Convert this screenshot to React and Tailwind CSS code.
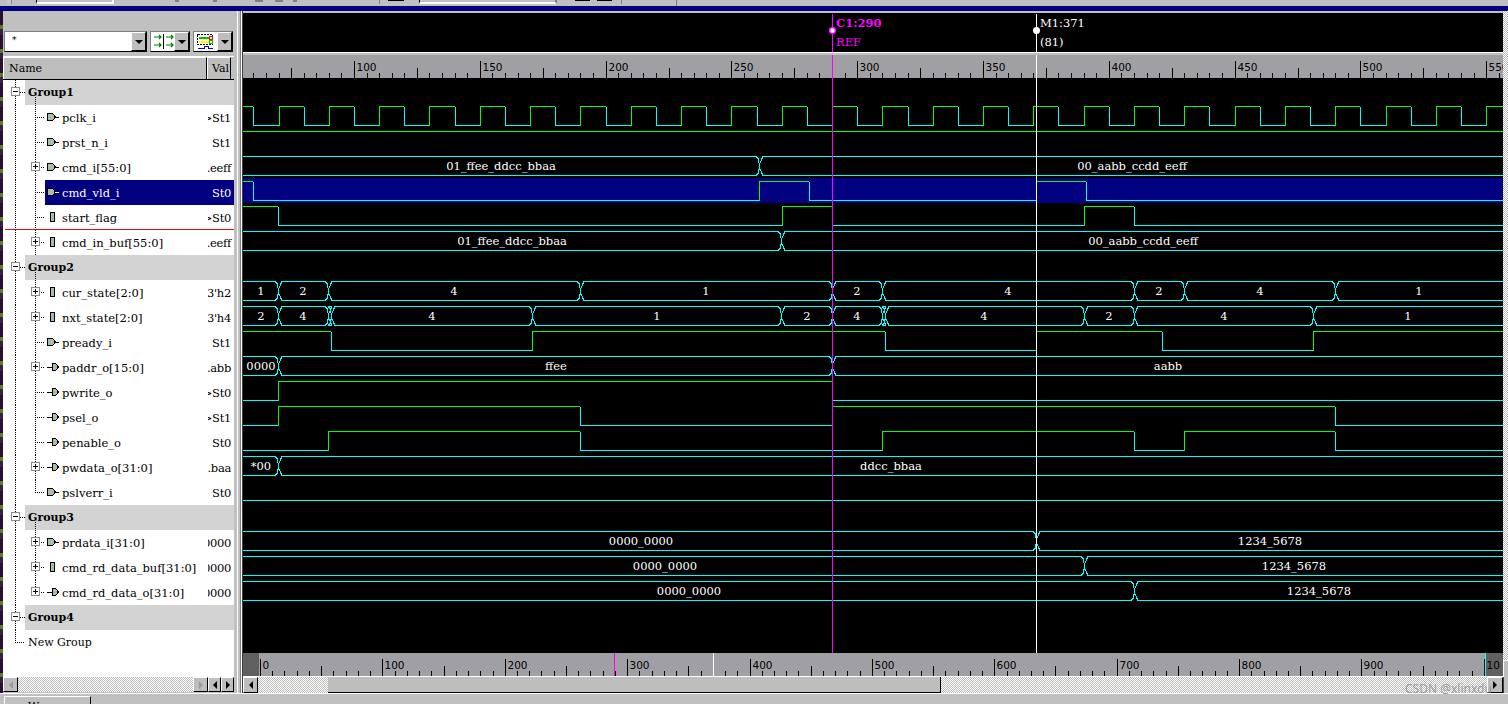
import React from 'react';

const font = { serif: 'font-["DejaVu_Serif",serif]' };
const CYAN = '#00ffff';
const GREEN = '#00ff00';
const MAGENTA = '#ff00ff';

const rows = [
  { type: 'group', name: 'Group1', c: 92 },
  { name: 'pclk_i', val: '>St1', icon: 'in', c: 117 },
  { name: 'prst_n_i', val: 'St1', icon: 'in', c: 142 },
  { name: 'cmd_i[55:0]', val: '.eeff', icon: 'in', plus: true, c: 167 },
  { name: 'cmd_vld_i', val: 'St0', icon: 'in', selected: true, c: 192 },
  { name: 'start_flag', val: '>St0', icon: 'reg', c: 217 },
  { name: 'cmd_in_buf[55:0]', val: '.eeff', icon: 'reg', plus: true, c: 242 },
  { type: 'group', name: 'Group2', c: 267 },
  { name: 'cur_state[2:0]', val: "3'h2", icon: 'reg', plus: true, c: 292 },
  { name: 'nxt_state[2:0]', val: "3'h4", icon: 'reg', plus: true, c: 317 },
  { name: 'pready_i', val: 'St1', icon: 'in', c: 342 },
  { name: 'paddr_o[15:0]', val: '.abb', icon: 'out', plus: true, c: 367 },
  { name: 'pwrite_o', val: '>St0', icon: 'out', c: 392 },
  { name: 'psel_o', val: '>St1', icon: 'out', c: 417 },
  { name: 'penable_o', val: 'St0', icon: 'out', c: 442 },
  { name: 'pwdata_o[31:0]', val: '.baa', icon: 'out', plus: true, c: 467 },
  { name: 'pslverr_i', val: 'St0', icon: 'in', last: true, c: 492 },
  { type: 'group', name: 'Group3', c: 517 },
  { name: 'prdata_i[31:0]', val: '0000', icon: 'in', plus: true, c: 542 },
  { name: 'cmd_rd_data_buf[31:0]', val: '0000', icon: 'reg', plus: true, c: 567 },
  { name: 'cmd_rd_data_o[31:0]', val: '0000', icon: 'out', plus: true, last: true, c: 592 },
  { type: 'group', name: 'Group4', c: 617, noChild: true },
  { type: 'new', name: 'New Group', c: 642 },
];

// digital waves: row centre, first level, edge x positions
const clkEdges = [];
for (let t = 60; t < 555; t += 10) clkEdges.push(Math.round(354 + (t - 100) * 2.516));

const digital = [
  { c: 117, start: 1, edges: clkEdges },
  { c: 142, start: 1, edges: [] },
  { c: 192, start: 1, edges: [253, 759, 809, 1036, 1086] },
  { c: 217, start: 1, edges: [278, 782, 832, 1084, 1134] },
  { c: 342, start: 1, edges: [331, 532, 885, 1036, 1162, 1313] },
  { c: 392, start: 0, edges: [278, 832] },
  { c: 417, start: 0, edges: [278, 580, 832, 1335] },
  { c: 442, start: 0, edges: [328, 580, 882, 1134, 1184, 1335] },
  { c: 492, start: 0, edges: [] },
];

const buses = [
  { c: 167, xs: [759], labels: [['01_ffee_ddcc_bbaa', 501], ['00_aabb_ccdd_eeff', 1132]] },
  { c: 242, xs: [781], labels: [['01_ffee_ddcc_bbaa', 512], ['00_aabb_ccdd_eeff', 1143]] },
  {
    c: 292, xs: [278, 328, 580, 832, 882, 1134, 1184, 1335],
    labels: [['1', 261], ['2', 303], ['4', 454], ['1', 706], ['2', 857], ['4', 1008], ['2', 1159], ['4', 1260], ['1', 1419]],
  },
  {
    c: 317, xs: [278, 328, 331, 532, 781, 832, 882, 885, 1084, 1134, 1313],
    labels: [['2', 261], ['4', 303], ['4', 432], ['1', 657], ['2', 807], ['4', 857], ['4', 984], ['2', 1109], ['4', 1224], ['1', 1408]],
  },
  { c: 367, xs: [278, 832], labels: [['0000', 261], ['ffee', 556], ['aabb', 1168]] },
  { c: 467, xs: [278], labels: [['*00', 261], ['ddcc_bbaa', 891]] },
  { c: 542, xs: [1036], labels: [['0000_0000', 641], ['1234_5678', 1270]] },
  { c: 567, xs: [1084], labels: [['0000_0000', 665], ['1234_5678', 1294]] },
  { c: 592, xs: [1134], labels: [['0000_0000', 689], ['1234_5678', 1319]] },
];

function DigitalWave({ c, start, edges }) {
  const hi = c - 10.5;
  const lo = c + 8.5;
  const pts = [243, ...edges, 1503];
  let level = start;
  const parts = [];
  for (let i = 0; i < pts.length - 1; i++) {
    const y = level ? hi : lo;
    parts.push(<line key={'h' + i} x1={pts[i]} x2={pts[i + 1]} y1={y} y2={y} stroke={level ? GREEN : CYAN} />);
    if (i < pts.length - 2) {
      // rising edge is drawn green, falling edge cyan
      parts.push(<line key={'v' + i} x1={pts[i + 1] + 0.5} x2={pts[i + 1] + 0.5} y1={hi} y2={lo} stroke={level ? CYAN : GREEN} />);
    }
    level = level ? 0 : 1;
  }
  return <g>{parts}</g>;
}

function BusWave({ c, xs, labels }) {
  const hi = c - 10.5;
  const lo = c + 8.5;
  const mid = c - 1;
  const pts = [243, ...xs, 1506];
  return (
    <g>
      {pts.slice(0, -1).map((x, i) => {
        const a = i === 0 ? x : x + 4;
        const b = pts[i + 1] - 3;
        return (
          <g key={i}>
            <line x1={a} x2={b} y1={hi} y2={hi} stroke={CYAN} />
            <line x1={a} x2={b} y1={lo} y2={lo} stroke={CYAN} />
          </g>
        );
      })}
      {xs.map((x) => (
        <path
          key={x}
          d={`M${x - 3} ${hi}L${x - 1} ${hi + 2}L${x} ${mid - 3}L${x + 1} ${mid - 3}L${x + 3} ${hi + 2}L${x + 4} ${hi}M${x - 3} ${lo}L${x - 1} ${lo - 2}L${x} ${mid + 3}L${x + 1} ${mid + 3}L${x + 3} ${lo - 2}L${x + 4} ${lo}M${x + 0.5} ${mid - 3}V${mid + 3}`}
          fill="none"
          stroke={CYAN}
        />
      ))}
      {labels.map(([text, x], i) => (
        <text key={i} x={x} y={c + 3} textAnchor="middle" fill="#fff" fontSize="11.5" stroke="none" style={{ fontFamily: '"DejaVu Serif", serif' }}>
          {text}
        </text>
      ))}
    </g>
  );
}

function SignalIcon({ kind, selected }) {
  const fill = '#a9bdaa';
  const ink = selected ? '#fff' : '#000';
  if (kind === 'reg') {
    return <rect x="50.5" y="-4.5" width="4" height="9" fill={fill} stroke="#000" />;
  }
  if (kind === 'in') {
    return (
      <g>
        <path d="M47.5 -3.5H52.5L55.5 0L52.5 3.5H47.5Z" fill={fill} stroke="#000" />
        <line x1="55" x2="59" y1="0.5" y2="0.5" stroke={ink} />
      </g>
    );
  }
  return (
    <g>
      <line x1="47" x2="52" y1="0.5" y2="0.5" stroke={ink} />
      <path d="M52.5 -3.5H55.5L58.5 0L55.5 3.5H52.5Z" fill={fill} stroke="#000" />
    </g>
  );
}

function Expander({ x, minus }) {
  return (
    <g>
      <rect x={x + 0.5} y="-4.5" width="8" height="8" fill="#fff" stroke="#8c8c8c" />
      <line x1={x + 2} x2={x + 7} y1="-0.5" y2="-0.5" stroke="#000" />
      {!minus && <line x1={x + 4.5} x2={x + 4.5} y1="-3" y2="2" stroke="#000" />}
    </g>
  );
}

function TreeRow({ row }) {
  const isGroup = row.type === 'group';
  const isNew = row.type === 'new';
  const childLine = !isGroup && !isNew;
  // vertical rail of the children ends at the last signal of a group
  const rail2 = childLine ? (row.last ? 'M35.5 -12V0' : 'M35.5 -12V13') : isGroup && !row.noChild ? 'M35.5 5V13' : '';
  return (
    <div className="relative flex h-[25px] items-stretch">
      {isGroup && <div className="absolute top-0 bottom-0 left-[21px] right-0 bg-[#d3d3d3]" />}
      {row.selected && <div className="absolute top-0 bottom-0 left-[41px] right-0 bg-[#000080]" />}
      <svg width="58" height="25" viewBox="4 -12 58 25" className="relative shrink-0" shapeRendering="crispEdges">
        <path d={isNew ? 'M15.5 -12V0' : 'M15.5 -12V13'} stroke="#000" strokeDasharray="1 1" fill="none" />
        {(isGroup || isNew) && <path d={isGroup ? 'M20 0.5H25' : 'M15 0.5H25'} stroke="#000" strokeDasharray="1 1" fill="none" />}
        {isGroup && <Expander x={11} minus />}
        {rail2 && <path d={rail2} stroke="#000" strokeDasharray="1 1" fill="none" />}
        {childLine && <path d="M35 0.5H45" stroke="#000" strokeDasharray="1 1" fill="none" />}
        {row.plus && <Expander x={31} />}
        {childLine && <SignalIcon kind={row.icon} selected={row.selected} />}
      </svg>
      {isGroup || isNew ? (
        <span className={`absolute left-[24px] top-[5px] text-[11px] leading-[16px] text-black ${isGroup ? 'font-bold' : ''} ${font.serif}`}>
          {row.name}
        </span>
      ) : (
        <>
          <span className={`relative flex-1 pt-[5px] text-[11.5px] leading-[16px] whitespace-nowrap ${row.selected ? 'text-white' : 'text-black'} ${font.serif}`}>
            {row.name}
          </span>
          <span className={`relative flex w-[26px] shrink-0 justify-end overflow-hidden pt-[5px] text-[11.5px] leading-[16px] tracking-[-0.3px] whitespace-nowrap ${row.selected ? 'text-white' : 'text-black'} ${font.serif}`}>
            <span className="shrink-0 pr-[3px]">{row.val}</span>
          </span>
        </>
      )}
    </div>
  );
}

function Arrow({ dir = 'down', muted }) {
  const d = { down: 'M0 0H8L4 4Z', left: 'M4 0V8L0 4Z', right: 'M0 0V8L4 4Z' }[dir];
  return (
    <svg width={dir === 'down' ? 8 : 4} height={dir === 'down' ? 4 : 8} viewBox={dir === 'down' ? '0 0 8 4' : '0 0 4 8'}>
      <path d={d} fill={muted ? '#9a9a9a' : '#000'} />
    </svg>
  );
}

function RaisedBtn({ children, className = '' }) {
  return (
    <div className={`flex items-center justify-center border-t border-l border-t-white border-l-white border-r border-b border-r-black border-b-black bg-[#bebebe] ${className}`}>
      {children}
    </div>
  );
}

function Track({ className = '' }) {
  return <div className={`bg-[repeating-conic-gradient(#bdbdbd_0_25%,#ffffff_0_50%)] bg-[length:2px_2px] ${className}`} />;
}

function ToolCombo({ children, w }) {
  return (
    <div className={`flex h-[21px] items-stretch border border-t-[#808080] border-l-[#808080] border-r-black border-b-black bg-white ${w}`}>
      <div className="flex-1 overflow-hidden">{children}</div>
      <RaisedBtn className="w-[15px]"><Arrow /></RaisedBtn>
    </div>
  );
}

function TopRuler() {
  const ticks = [];
  for (let t = 55; t <= 555; t += 5) {
    const x = Math.round(354 + (t - 100) * 2.516) + 0.5;
    const big = t % 50 === 0;
    const mid = t % 25 === 0;
    ticks.push(<line key={t} x1={x} x2={x} y1={big ? 61 : mid ? 68 : 73} y2="78" stroke="#000" />);
    if (big && t >= 100) {
      ticks.push(
        <text key={'l' + t} x={x + 2} y="71" fontSize="10.5" fill="#000" stroke="none" style={{ fontFamily: '"DejaVu Sans", sans-serif' }}>
          {t}
        </text>
      );
    }
  }
  return (
    <svg width="1260" height="23" viewBox="243 55 1260 23" className="block bg-[#a0a0a4]" shapeRendering="crispEdges">
      {ticks}
      <line x1="832.5" x2="832.5" y1="55" y2="78" stroke={MAGENTA} />
      <line x1="1036.5" x2="1036.5" y1="55" y2="78" stroke="#fff" />
    </svg>
  );
}

function BottomRuler() {
  const ticks = [];
  for (let t = 0; t <= 1000; t += 10) {
    const x = Math.round(260 + t * 1.2238) + 0.5;
    const big = t % 100 === 0;
    const mid = t % 50 === 0;
    ticks.push(<line key={t} x1={x} x2={x} y1={big ? 659 : mid ? 666 : 671} y2="676" stroke="#000" />);
    if (big) {
      ticks.push(
        <text key={'l' + t} x={x + 2} y="669" fontSize="10.5" fill="#000" stroke="none" style={{ fontFamily: '"DejaVu Sans", sans-serif' }}>
          {t === 1000 ? '10' : t}
        </text>
      );
    }
  }
  return (
    <svg width="1260" height="24" viewBox="243 653 1260 24" className="block bg-[#a0a0a4]" shapeRendering="crispEdges">
      <rect x="243" y="653" width="16" height="23" fill="#606060" />
      <rect x="1485" y="653" width="18" height="23" fill="#606060" />
      {ticks}
      <rect x="1485" y="653" width="1" height="23" fill={CYAN} />
      <rect x="614" y="653" width="1" height="23" fill={MAGENTA} />
      <rect x="713" y="653" width="1" height="23" fill="#fff" />
      <rect x="243" y="676" width="1260" height="1" fill="#fff" />
    </svg>
  );
}

export default function App() {
  return (
    <div className="relative flex h-[704px] w-[1508px] flex-col overflow-hidden bg-[#c0c0c0]">
      {/* toolbar remains, cut off by the screenshot */}
      <div className="flex h-[6px] items-start">
        <div className="ml-[7px] h-[4px] w-[5px] border-r border-[#808080] bg-[#c8c8c8]" />
        <div className="ml-[24px] h-[4px] w-[78px] border-l border-b-2 border-r-2 border-l-black border-b-white border-r-white bg-[#c0c0c0]" />
        <div className="ml-[61px] h-[2px] w-[4px] bg-[#808080]" />
        <div className="ml-[34px] h-[2px] w-[4px] bg-[#808080]" />
        <div className="ml-[38px] h-[2px] w-[8px] bg-[#808080]" />
        <div className="ml-[12px] h-[2px] w-[8px] bg-[#808080]" />
        <div className="ml-[10px] h-[2px] w-[4px] bg-[#808080]" />
        <div className="ml-[79px] h-[4px] w-[4px] border-r border-[#808080]" />
        <div className="ml-[8px] h-[1px] w-[16px] bg-black" />
        <div className="ml-[15px] h-[4px] w-[138px] border-l border-b-2 border-r-2 border-l-black border-b-white border-r-[#808080]" />
        <div className="ml-[18px] h-[1px] w-[15px] bg-black" />
        <div className="ml-[7px] h-[1px] w-[15px] bg-black" />
        <div className="ml-[6px] h-[4px] w-[4px] border-r border-[#808080]" />
        <div className="ml-[54px] h-[6px] w-[1px] bg-[#808080]" />
      </div>
      <div className="h-[5px] bg-[#000080]" />

      <div className="flex min-h-0 flex-1">
        {/* desktop behind the window */}
        <div className="w-[3px] shrink-0 bg-[repeating-linear-gradient(180deg,#2a1030_0_14px,#5b7a2a_14px_18px,#3a2040_18px_24px)]" />

        {/* signal panel */}
        <div className="flex w-[231px] shrink-0 flex-col">
          <div className="h-[20px]" />
          <div className="flex h-[21px] items-stretch gap-[3px] pl-[1px]">
            <ToolCombo w="w-[143px]">
              <div className={`pl-[7px] pt-[2px] text-[9px] leading-[12px] text-black ${font.serif}`}>*</div>
            </ToolCombo>
            <ToolCombo w="w-[40px]">
              <svg width="24" height="19" viewBox="0 0 24 19">
                <path d="M3 5H10M8 3L10 5L8 7M3 13H10M8 11L10 13L8 15M15 5H22M20 3L22 5L20 7M15 13H22M20 11L22 13L20 15" fill="none" stroke="#008000" strokeWidth="1.2" />
                <path d="M12.5 2V17" stroke="#000" />
              </svg>
            </ToolCombo>
            <ToolCombo w="w-[40px]">
              <svg width="24" height="19" viewBox="0 0 24 19" shapeRendering="crispEdges">
                <rect x="3.5" y="2.5" width="15" height="10" fill="none" stroke="#000" strokeDasharray="2 1" />
                <rect x="5" y="5" width="10" height="2" fill="#00c000" />
                <rect x="15.5" y="4.5" width="3" height="3" fill="none" stroke="#ff0000" />
                <rect x="5" y="9" width="10" height="2" fill="#ffff00" />
                <rect x="15.5" y="8.5" width="3" height="3" fill="none" stroke="#00c000" />
                <path d="M4 16.5H10V14.5H14V16.5H19" fill="none" stroke="#0000ff" />
              </svg>
            </ToolCombo>
          </div>
          <div className="h-[5px] border-b border-b-white" />
          <div className={`flex h-[23px] shrink-0 border-b border-b-black text-[11px] leading-[22px] text-black ${font.serif}`}>
            <div className="w-[204px] border-t border-l border-r border-t-white border-l-white border-r-black bg-[#bebebe] pl-[5px]">Name</div>
            <div className="w-[24px] overflow-hidden border-t border-l border-r border-t-white border-l-white border-r-black bg-[#bebebe] pl-[4px]">Val</div>
          </div>
          <div className="relative min-h-0 flex-1 overflow-hidden bg-white pl-[1px]">
            {rows.map((row) => (
              <TreeRow key={row.name} row={row} />
            ))}
            <div className="absolute left-[2px] right-0 top-[149px] h-[1px] bg-[#e01010]" />
          </div>
          <div className="flex h-[15px] shrink-0">
            <RaisedBtn className="w-[15px] border-r-[#808080] border-b-[#808080]"><Arrow dir="left" muted /></RaisedBtn>
            <Track className="flex-1" />
            <RaisedBtn className="w-[15px] border-r-[#808080] border-b-[#808080]"><Arrow dir="right" muted /></RaisedBtn>
            <RaisedBtn className="w-[13px]"><Arrow dir="left" /></RaisedBtn>
            <RaisedBtn className="w-[13px]"><Arrow dir="right" /></RaisedBtn>
          </div>
          <div className="h-[1px]" />
        </div>

        {/* splitter */}
        <div className="flex w-[9px] shrink-0">
          <div className="w-[3px] bg-[#c0c0c0]" />
          <div className="w-[1px] bg-white" />
          <div className="w-[2px] bg-[#c0c0c0]" />
          <div className="w-[1px] bg-[#808080]" />
          <div className="w-[1px] bg-white" />
          <div className="w-[1px] bg-[#404040]" />
        </div>

        {/* wave panel */}
        <div className="flex w-[1260px] shrink-0 flex-col">
          <div className="h-[2px]" />
          <svg width="1260" height="39" viewBox="243 13 1260 39" className="block shrink-0 bg-black" shapeRendering="crispEdges">
            <line x1="832.5" x2="832.5" y1="14" y2="52" stroke={MAGENTA} />
            <circle cx="832.5" cy="30.5" r="3" fill="#fff" stroke={MAGENTA} strokeWidth="1.5" shapeRendering="auto" />
            <line x1="1036.5" x2="1036.5" y1="14" y2="52" stroke="#fff" />
            <circle cx="1036.5" cy="30.5" r="3.5" fill="#fff" shapeRendering="auto" />
            <text x="836" y="27" fontSize="11.5" fontWeight="700" fill={MAGENTA} style={{ fontFamily: '"DejaVu Serif", serif' }}>C1:290</text>
            <text x="836" y="46" fontSize="11.5" fill={MAGENTA} style={{ fontFamily: '"DejaVu Serif", serif' }}>REF</text>
            <text x="1040" y="27" fontSize="11.5" fill="#fff" style={{ fontFamily: '"DejaVu Serif", serif' }}>M1:371</text>
            <text x="1040" y="46" fontSize="11.5" fill="#fff" style={{ fontFamily: '"DejaVu Serif", serif' }}>(81)</text>
          </svg>
          <div className="h-[3px] shrink-0 border-t border-t-white bg-[#c0c0c0]" />
          <TopRuler />
          <svg width="1260" height="575" viewBox="243 78 1260 575" className="block shrink-0 bg-black" shapeRendering="crispEdges">
            <rect x="243" y="178" width="1260" height="25" fill="#000080" />
            {digital.map((w) => <DigitalWave key={w.c} {...w} />)}
            {buses.map((b) => <BusWave key={b.c} {...b} />)}
            <line x1="832.5" x2="832.5" y1="78" y2="653" stroke={MAGENTA} />
            <line x1="1036.5" x2="1036.5" y1="78" y2="653" stroke="#fff" />
          </svg>
          <BottomRuler />
          <div className="flex h-[16px] shrink-0">
            <RaisedBtn className="w-[15px]"><Arrow dir="left" /></RaisedBtn>
            <Track className="w-[70px]" />
            <div className="w-[613px] border-r border-b border-r-black border-b-black bg-[#bebebe]" />
            <Track className="flex-1" />
            <RaisedBtn className="w-[16px]"><Arrow dir="right" /></RaisedBtn>
          </div>
        </div>

        {/* vertical scrollbar, mostly off the right edge */}
        <div className="flex min-w-0 flex-1 flex-col">
          <Track className="flex-1" />
          <div className="h-[17px] shrink-0 border-t border-l border-t-white border-l-white bg-[#bebebe]" />
          <div className="h-[16px] shrink-0 border-l border-l-[#404040] bg-[#c0c0c0]" />
        </div>
      </div>

      {/* tab strip, cut off at the bottom */}
      <div className="h-[11px] shrink-0 border-t border-t-white pl-[4px] pt-[2px]">
        <div className={`flex h-[9px] w-[87px] items-start gap-[4px] overflow-hidden border-t border-l border-r border-t-white border-l-white border-r-black pl-[5px] pt-[4px] text-[11px] leading-[12px] ${font.serif}`}>
          <div className="mt-[1px] h-[4px] w-[14px] border-b border-[#000080]" />
          <span>Wave</span>
        </div>
      </div>

      <span className="absolute left-[1405px] top-[682px] font-['Noto_Sans',sans-serif] text-[12px] leading-[14px] text-[#8a8a8a]/80">
        CSDN @xlinxdu
      </span>
    </div>
  );
}
